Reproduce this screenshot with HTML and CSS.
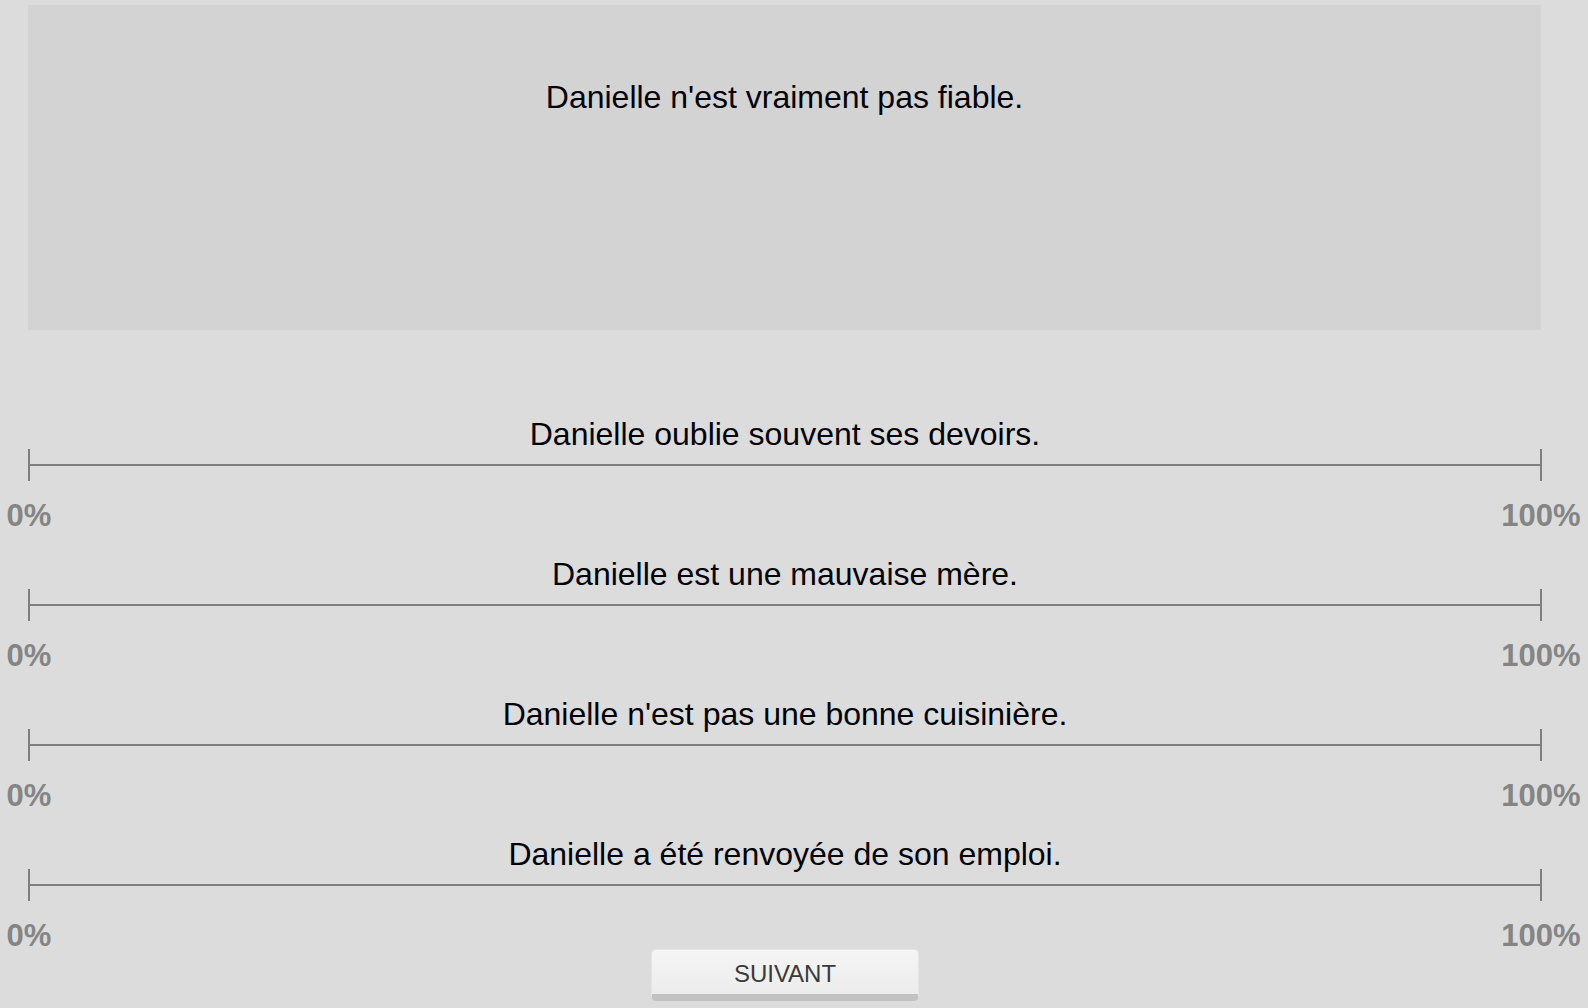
FILE: index.html
```html
<!DOCTYPE html>
<html lang="fr">
<head>
<meta charset="utf-8">
<title>Questionnaire</title>
<link rel="stylesheet" href="styles.css">
</head>
<body>
<div class="page">
  <div class="panel">
    <p class="statement">Danielle n'est vraiment pas fiable.</p>
  </div>

  <div class="sliders">
    <div class="slider">
      <div class="question">Danielle oublie souvent ses devoirs.</div>
      <div class="track"><span class="tick"></span><span class="line"></span><span class="tick"></span></div>
      <div class="labels"><span class="lab">0%</span><span class="lab">100%</span></div>
    </div>
    <div class="slider">
      <div class="question">Danielle est une mauvaise mère.</div>
      <div class="track"><span class="tick"></span><span class="line"></span><span class="tick"></span></div>
      <div class="labels"><span class="lab">0%</span><span class="lab">100%</span></div>
    </div>
    <div class="slider">
      <div class="question">Danielle n'est pas une bonne cuisinière.</div>
      <div class="track"><span class="tick"></span><span class="line"></span><span class="tick"></span></div>
      <div class="labels"><span class="lab">0%</span><span class="lab">100%</span></div>
    </div>
    <div class="slider">
      <div class="question">Danielle a été renvoyée de son emploi.</div>
      <div class="track"><span class="tick"></span><span class="line"></span><span class="tick"></span></div>
      <div class="labels"><span class="lab">0%</span><span class="lab">100%</span></div>
    </div>
  </div>

  <div class="actions">
    <button class="next" type="button">SUIVANT</button>
  </div>
</div>
</body>
</html>
```

FILE: styles.css
```css
html, body {
  margin: 0;
  padding: 0;
  background: #dcdcdc;
  font-family: "Liberation Sans", Arial, sans-serif;
  color: #000;
}

.page {
  width: 1514px;
  margin-left: 28px;
  padding-top: 5px;
}

.panel {
  height: 325px;
  width: 1513px;
  background: #d3d3d3;
  box-sizing: border-box;
  padding-top: 78px;
}

.statement {
  margin: 0;
  font-size: 32px;
  line-height: 29px;
  text-align: center;
}

.sliders {
  margin-top: 90px;
  display: flex;
  flex-direction: column;
  gap: 29px;
}

.question {
  font-size: 32px;
  line-height: 29px;
  text-align: center;
}

.track {
  height: 32px;
  display: flex;
  align-items: center;
}

.tick {
  width: 2px;
  height: 32px;
  background: #7f7f7f;
}

.line {
  flex: 1;
  height: 2px;
  background: #7f7f7f;
}

.labels {
  margin-top: 20px;
  display: flex;
  justify-content: space-between;
  padding: 0 1px;
}

.lab {
  width: 0;
  display: flex;
  justify-content: center;
  white-space: nowrap;
  font-size: 31px;
  line-height: 30px;
  font-weight: bold;
  color: #858585;
}

.actions {
  display: flex;
  justify-content: center;
  margin-top: -2px;
}

.next {
  box-sizing: border-box;
  width: 268px;
  height: 52px;
  padding: 4px 0 0;
  border: 1px solid #e4e4e4;
  border-bottom: 7px solid #c2c2c2;
  border-radius: 5px;
  background: linear-gradient(#f5f5f5, #ececec);
  font-family: "Liberation Sans", Arial, sans-serif;
  font-size: 24px;
  color: #3a3a3a;
  cursor: pointer;
}
```
